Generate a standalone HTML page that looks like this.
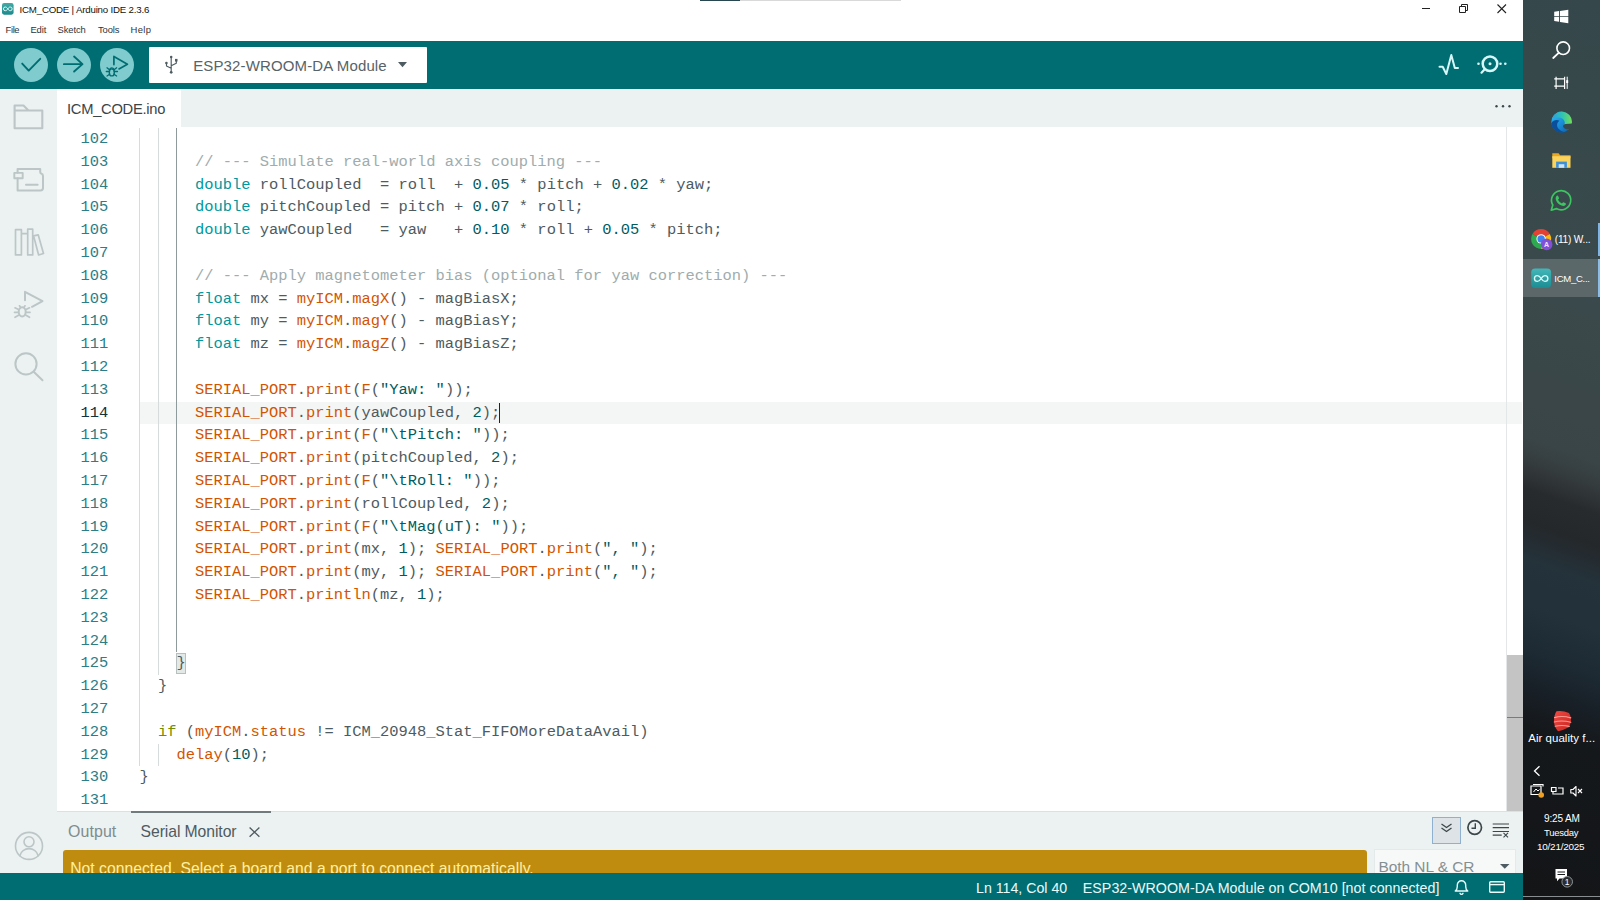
<!DOCTYPE html>
<html lang="en">
<head>
<meta charset="utf-8">
<title>ICM_CODE | Arduino IDE 2.3.6</title>
<style>
*{box-sizing:border-box;margin:0;padding:0}
html,body{width:1600px;height:900px;overflow:hidden;background:#fff}
body{position:relative;font-family:"Liberation Sans",sans-serif;color:#4e5b61}
.abs{position:absolute}
svg{position:absolute;overflow:visible}
.t{position:absolute;white-space:pre;line-height:1}
#app{position:absolute;left:0;top:0;width:1522.5px;height:900px;background:#fff;overflow:hidden}
#toolbar{position:absolute;left:0;top:40.8px;width:1523px;height:47.9px;background:#006d73}
.tbtn{position:absolute;top:7.3px;width:34px;height:34px;border-radius:50%;background:#7fcbcd}
#board{position:absolute;left:149px;top:6.7px;width:277.8px;height:35.4px;background:#fff;border-radius:1px}
#sidebar{position:absolute;left:0;top:88.7px;width:57px;height:785px;background:#ecf1f1}
#tabbar{position:absolute;left:57px;top:88.7px;width:1466px;height:38.6px;background:#ecf1f1}
#tab{position:absolute;left:0;top:0;width:124px;height:38.6px;background:#fff}
#editor{position:absolute;left:57px;top:127.3px;width:1466px;height:683.7px;background:#fff;overflow:hidden}
#bottom{position:absolute;left:57px;top:811px;width:1466px;height:63px;background:#ecf1f1;overflow:hidden}
#status{position:absolute;left:0;top:873.4px;width:1523px;height:27px;background:#006d73}
.code{font-family:"Liberation Mono","DejaVu Sans Mono",monospace;font-size:15.43px;color:#4e5b61}
.ln{position:absolute;left:0;width:51.2px;text-align:right;color:#2b7d86;height:22.8px;line-height:22.8px;white-space:pre}
.cl{position:absolute;left:82.4px;height:22.8px;line-height:22.8px;white-space:pre}
.c{color:#a0acad}.k{color:#00979d}.n{color:#005c5f}.f{color:#d35400}.g{color:#728e00}.s{color:#005c5f}
.guide{position:absolute;width:1px;background:#d6dbdb}
#taskbar{position:absolute;left:1522.5px;top:0;width:77.5px;height:900px;overflow:hidden;
 background:linear-gradient(200deg,#35474a 0%,#3a4a4c 30%,#3a4547 50%,#353c3e 52.5%,#282b2e 55.5%,#24282b 59%,#24323a 63%,#22313a 68%,#1d2a33 73%,#181f26 77%,#15181b 81%,#131517 100%)}
</style>
</head>

<body>
<div id="app">
<!-- title bar -->
<div class="abs" style="left:700px;top:0;width:40px;height:1px;background:#274650"></div>
<div class="abs" style="left:740px;top:0;width:161px;height:1px;background:#d9d9d9"></div>
<svg style="left:2.400px;top:3.250px" width="11.600" height="11.700" viewBox="0 0 12 12">
  <defs><linearGradient id="ag" x1="0" y1="0" x2="0" y2="1"><stop offset="0" stop-color="#43aaa6"/><stop offset="1" stop-color="#1d8a8c"/></linearGradient></defs>
  <rect x="0" y="0" width="12" height="12" rx="2.2" fill="url(#ag)"/>
  <path d="M6 6c-.9-1.4-1.6-1.9-2.6-1.9a1.9 1.9 0 0 0 0 3.8c1 0 1.700-.5 2.600-1.900c.9 1.400 1.600 1.900 2.600 1.900a1.900 1.900 0 0 0 0-3.800c-1 0-1.700.5-2.600 1.900z" fill="none" stroke="#e8fbfb" stroke-width="1"/>
</svg>
<!-- window controls -->
<svg style="left:1415px;top:0" width="100" height="19" viewBox="0 0 100 19">
  <path d="M7 8.500h8" stroke="#222" stroke-width="1" fill="none"/>
  <path d="M44.500 6.500h6v6h-6zM46.500 6.500v-2h6v6h-2" stroke="#222" stroke-width="1" fill="none"/>
  <path d="M82.500 4.500l8.500 8.500M91 4.500l-8.500 8.500" stroke="#222" stroke-width="1.100" fill="none"/>
</svg>
<!-- toolbar -->
<div id="toolbar">
  <div class="tbtn" style="left:14px"></div>
  <div class="tbtn" style="left:57.300px"></div>
  <div class="tbtn" style="left:100.300px"></div>
  <svg style="left:14px;top:7.300px" width="34" height="34" viewBox="0 0 34 34"><path d="M8.200 15.600l6.500 7L26.200 10.800" fill="none" stroke="#006d73" stroke-width="1.900" stroke-linecap="round" stroke-linejoin="round"/></svg>
  <svg style="left:57.300px;top:7.300px" width="34" height="34" viewBox="0 0 34 34"><path d="M6.900 16.150H25.300M17.100 8.550l8.400 7.600l-8.400 7.350" fill="none" stroke="#006d73" stroke-width="1.900" stroke-linecap="round" stroke-linejoin="round"/></svg>
  <svg style="left:100.300px;top:7.300px" width="34" height="34" viewBox="0 0 34 34" fill="none" stroke="#006d73" stroke-linecap="round" stroke-linejoin="round">
    <path d="M13.900 16.600V8.400l13.500 7.800l-8.400 4.700" stroke-width="1.700"/>
    <ellipse cx="11.800" cy="24.400" rx="2.500" ry="3.500" stroke-width="1.400"/>
    <path d="M9.700 21.200a2.300 2.300 0 0 1 4.200 0" stroke-width="1.300"/>
    <path d="M6.300 23.500h3M14.300 23.500h3.200M7 19.800l2.500 2M16.600 19.800l-2.500 2M7 28l2.600-1.700M16.600 28l-2.600-1.700" stroke-width="1.300"/>
  </svg>
  <div id="board"></div>
  <!-- usb icon -->
  <svg style="left:165px;top:14.500px" width="14" height="19" viewBox="0 0 14 19">
    <path d="M6.200 2.300V17M6.200 13.300L1.500 11V8.200M6.200 10.800l5.100-2.600V5.200" fill="none" stroke="#4e5b61" stroke-width="1.150" stroke-linecap="round" stroke-linejoin="round"/>
    <circle cx="6.200" cy="17.300" r="1.350" fill="#4e5b61"/><circle cx="6.200" cy="2.100" r="1.250" fill="#4e5b61"/><circle cx="1.400" cy="8" r="1.300" fill="#4e5b61"/><rect x="10" y="3.900" width="2.500" height="2.600" fill="#4e5b61"/>
  </svg>
  <svg style="left:398.300px;top:21px" width="10" height="6" viewBox="0 0 10 6"><path d="M0 0h9L4.500 5.200z" fill="#4e5b61"/></svg>
  <!-- plotter -->
  <svg style="left:1437px;top:11px" width="24" height="26" viewBox="0 0 24 26"><path d="M2.500 14.800h3.200l3.600 7.200l5-19l3.500 13h3.200" fill="none" stroke="#d6f7f7" stroke-width="2" stroke-linejoin="round" stroke-linecap="round"/></svg>
  <!-- serial monitor -->
  <svg style="left:1474px;top:11px" width="36" height="26" viewBox="0 0 36 26">
    <circle cx="16" cy="11.800" r="7.300" fill="none" stroke="#d6f7f7" stroke-width="2.500"/>
    <path d="M10.500 17.500L7.500 20.700" stroke="#d6f7f7" stroke-width="2.200" stroke-linecap="round"/>
    <circle cx="16" cy="11.800" r="1.500" fill="#d6f7f7"/><circle cx="4.500" cy="11.800" r="1.300" fill="#d6f7f7"/><circle cx="26.500" cy="11.800" r="1.300" fill="#d6f7f7"/><circle cx="31.300" cy="11.800" r="1.300" fill="#d6f7f7"/>
  </svg>
</div>
<!-- tab bar -->
<div id="tabbar"><div id="tab"></div>
  <svg style="left:1436px;top:15.600px" width="20" height="5" viewBox="0 0 20 5"><circle cx="3.500" cy="2.200" r="1.200" fill="#3c474a"/><circle cx="10" cy="2.200" r="1.200" fill="#3c474a"/><circle cx="16.500" cy="2.200" r="1.200" fill="#3c474a"/></svg>
</div>

<div id="sidebar">
  <!-- coordinates inside are page coords minus (0,88.5) -->
  <svg style="left:0;top:0" width="57" height="785" viewBox="0 88.700 57 785" fill="none" stroke="#bcc6c7" stroke-width="2" stroke-linejoin="round" stroke-linecap="round">
    <!-- folder -->
    <path d="M14.600 128V105.200h8.900l5 5H42.300V128zM14.600 110.200H28.500" stroke-width="2.100"/>
    <!-- boards -->
    <path d="M17.600 172.500V168.700H40.200V171.300q0 2 1.300 2.100q1.500.4 1.500 2.200V187.800q0 2.400-2.500 2.400H17.600V178" stroke-width="2"/>
    <rect x="14.300" y="172.600" width="8.400" height="5.400" stroke-width="1.900"/>
    <path d="M26 184.400H37.600" stroke-width="2"/>
    <!-- library -->
    <path d="M15.500 229.400h5.900v25.200h-5.900zM21.400 233.400h6.300v21.200M27.700 228.900h5v25.700h-5zM33.600 235.600l4.600-1.100l5.300 18.700l-4.900 1.500z" stroke-width="1.700"/>
    <!-- debug -->
    <path d="M25 300V291.500l17.500 9.300l-10.500 5.700"/>
    <ellipse cx="22.200" cy="311.500" rx="3.500" ry="4.600" stroke-width="2"/>
    <path d="M15 307.500l3.500 1.700M29.500 307.500l-3.500 1.700M14.500 312h3.500M30 312h-3.500M15 317l3.500-2M29.500 317l-3.500-2M19.500 305.500l1 1.500M25 305.500l-1 1.500" stroke-width="1.700"/>
    <!-- search -->
    <circle cx="26" cy="363.600" r="10.600"/>
    <path d="M33.700 371.500L42.500 380"/>
    <!-- account -->
    <circle cx="29" cy="845.600" r="13.500" stroke-width="1.600"/>
    <circle cx="29" cy="841.500" r="5" stroke-width="1.600"/>
    <path d="M19.800 855.500a9.500 9.500 0 0 1 18.400 0" stroke-width="1.600"/>
  </svg>
</div>

<div id="editor" class="code">
<div class="abs" style="left:83px;top:274.9px;width:1382px;height:21.6px;background:#f4f6f6"></div>
<div class="abs" style="left:119.2px;top:525.4px;width:9.4px;height:21.6px;border:1px solid #b7bfbf;background:#e3e9e6"></div>
<div class="guide" style="left:82.1px;top:0.7px;height:638.4px"></div>
<div class="guide" style="left:100.5px;top:0.7px;height:547.2px"></div>
<div class="guide" style="left:119.0px;top:0.7px;height:524.4px;background:#8f9a9a"></div>
<div class="guide" style="left:100.5px;top:616.3px;height:22.8px"></div>
<div class="ln" style="top:0.7px">102</div>
<div class="ln" style="top:23.5px">103</div>
<div class="cl" style="top:23.5px"><span class="c">      // --- Simulate real-world axis coupling ---</span></div>
<div class="ln" style="top:46.3px">104</div>
<div class="cl" style="top:46.3px">      <span class="k">double</span> rollCoupled  = roll  + <span class="n">0.05</span> * pitch + <span class="n">0.02</span> * yaw;</div>
<div class="ln" style="top:69.1px">105</div>
<div class="cl" style="top:69.1px">      <span class="k">double</span> pitchCoupled = pitch + <span class="n">0.07</span> * roll;</div>
<div class="ln" style="top:91.9px">106</div>
<div class="cl" style="top:91.9px">      <span class="k">double</span> yawCoupled   = yaw   + <span class="n">0.10</span> * roll + <span class="n">0.05</span> * pitch;</div>
<div class="ln" style="top:114.7px">107</div>
<div class="ln" style="top:137.5px">108</div>
<div class="cl" style="top:137.5px"><span class="c">      // --- Apply magnetometer bias (optional for yaw correction) ---</span></div>
<div class="ln" style="top:160.3px">109</div>
<div class="cl" style="top:160.3px">      <span class="k">float</span> mx = <span class="f">myICM</span>.<span class="f">magX</span>() - magBiasX;</div>
<div class="ln" style="top:183.1px">110</div>
<div class="cl" style="top:183.1px">      <span class="k">float</span> my = <span class="f">myICM</span>.<span class="f">magY</span>() - magBiasY;</div>
<div class="ln" style="top:205.9px">111</div>
<div class="cl" style="top:205.9px">      <span class="k">float</span> mz = <span class="f">myICM</span>.<span class="f">magZ</span>() - magBiasZ;</div>
<div class="ln" style="top:228.7px">112</div>
<div class="ln" style="top:251.5px">113</div>
<div class="cl" style="top:251.5px">      <span class="f">SERIAL_PORT</span>.<span class="f">print</span>(<span class="f">F</span>(<span class="s">"Yaw: "</span>));</div>
<div class="ln" style="top:274.3px;color:#14323a">114</div>
<div class="cl" style="top:274.3px">      <span class="f">SERIAL_PORT</span>.<span class="f">print</span>(yawCoupled, <span class="n">2</span>);</div>
<div class="ln" style="top:297.1px">115</div>
<div class="cl" style="top:297.1px">      <span class="f">SERIAL_PORT</span>.<span class="f">print</span>(<span class="f">F</span>(<span class="s">"\tPitch: "</span>));</div>
<div class="ln" style="top:319.9px">116</div>
<div class="cl" style="top:319.9px">      <span class="f">SERIAL_PORT</span>.<span class="f">print</span>(pitchCoupled, <span class="n">2</span>);</div>
<div class="ln" style="top:342.7px">117</div>
<div class="cl" style="top:342.7px">      <span class="f">SERIAL_PORT</span>.<span class="f">print</span>(<span class="f">F</span>(<span class="s">"\tRoll: "</span>));</div>
<div class="ln" style="top:365.5px">118</div>
<div class="cl" style="top:365.5px">      <span class="f">SERIAL_PORT</span>.<span class="f">print</span>(rollCoupled, <span class="n">2</span>);</div>
<div class="ln" style="top:388.3px">119</div>
<div class="cl" style="top:388.3px">      <span class="f">SERIAL_PORT</span>.<span class="f">print</span>(<span class="f">F</span>(<span class="s">"\tMag(uT): "</span>));</div>
<div class="ln" style="top:411.1px">120</div>
<div class="cl" style="top:411.1px">      <span class="f">SERIAL_PORT</span>.<span class="f">print</span>(mx, <span class="n">1</span>); <span class="f">SERIAL_PORT</span>.<span class="f">print</span>(<span class="s">", "</span>);</div>
<div class="ln" style="top:433.9px">121</div>
<div class="cl" style="top:433.9px">      <span class="f">SERIAL_PORT</span>.<span class="f">print</span>(my, <span class="n">1</span>); <span class="f">SERIAL_PORT</span>.<span class="f">print</span>(<span class="s">", "</span>);</div>
<div class="ln" style="top:456.7px">122</div>
<div class="cl" style="top:456.7px">      <span class="f">SERIAL_PORT</span>.<span class="f">println</span>(mz, <span class="n">1</span>);</div>
<div class="ln" style="top:479.5px">123</div>
<div class="ln" style="top:502.3px">124</div>
<div class="ln" style="top:525.1px">125</div>
<div class="cl" style="top:525.1px">    }</div>
<div class="ln" style="top:547.9px">126</div>
<div class="cl" style="top:547.9px">  }</div>
<div class="ln" style="top:570.7px">127</div>
<div class="ln" style="top:593.5px">128</div>
<div class="cl" style="top:593.5px">  <span class="g">if</span> (<span class="f">myICM</span>.<span class="f">status</span> != ICM_20948_Stat_FIFOMoreDataAvail)</div>
<div class="ln" style="top:616.3px">129</div>
<div class="cl" style="top:616.3px">    <span class="f">delay</span>(<span class="n">10</span>);</div>
<div class="ln" style="top:639.1px">130</div>
<div class="cl" style="top:639.1px">}</div>
<div class="ln" style="top:661.9px">131</div>
<div class="abs" style="left:441.5px;top:275.7px;width:1.6px;height:20px;background:#222"></div>
<div class="abs" style="left:1449px;top:0;width:1px;height:684px;background:#e3e7e7"></div>
<div class="abs" style="left:1449.7px;top:528px;width:16.3px;height:156px;background:#c4c4c4"></div>
<div class="abs" style="left:1449.7px;top:589.6px;width:16.3px;height:1.5px;background:#7a7a7a"></div>
</div>
<div id="bottom">
  <!-- coords relative to (57,811) -->
  <div class="abs" style="left:0;top:0;width:1466px;height:1px;background:#dbe1e1"></div>
  <div class="abs" style="left:74px;top:.3px;width:140px;height:1.600px;background:#6f7b7d"></div>
  <!-- close x -->
  <svg style="left:192.100px;top:16.100px" width="11" height="10.300" viewBox="0 0 11 10.300"><path d="M.6 .5l9.800 9.300M10.400 .5L.6 9.800" stroke="#4e5b61" stroke-width="1.300" fill="none"/></svg>
  <!-- warning bar -->
  <div class="abs" style="left:6.400px;top:38.800px;width:1303.500px;height:30px;background:#c08c10;border-radius:3px 3px 0 0"></div>
  <div class="t" id="t_warn" style="left:13.20px;top:49.91px;font-size:15.70px;color:#fff0a0;letter-spacing:0.025px;">Not connected. Select a board and a port to connect automatically.</div>
  <!-- dropdown -->
  <div class="abs" style="left:1316.700px;top:38.400px;width:142.500px;height:32px;background:#f7f9f9;border:1px solid #e4e9e9"></div>
  <div class="t" id="t_nl" style="left:1321.50px;top:48.12px;font-size:15.45px;color:#858f91;letter-spacing:-0.045px;">Both NL &amp; CR</div>
  <svg style="left:1443px;top:52.600px" width="10" height="5" viewBox="0 0 10 5"><path d="M0 0h9.500L4.750 4.800z" fill="#4e5b61"/></svg>
  <!-- buttons -->
  <div class="abs" style="left:1375px;top:5.800px;width:28.700px;height:27.700px;background:#dde3e6;border:1px solid #8fb1cf"></div>
  <svg style="left:1383px;top:12px" width="13" height="10" viewBox="0 0 13 10"><path d="M1.500 1l5 3.500l5-3.500M1.500 5l5 3.500l5-3.500" fill="none" stroke="#3c474a" stroke-width="1.300"/></svg>
  <svg style="left:1409px;top:7.500px" width="18" height="18" viewBox="0 0 18 18"><circle cx="8.700" cy="8.500" r="6.800" fill="none" stroke="#3c474a" stroke-width="1.700"/><path d="M9.300 4.300v4.900h-3.800" fill="none" stroke="#3c474a" stroke-width="1.400"/></svg>
  <svg style="left:1435px;top:12px" width="18" height="15" viewBox="0 0 18 15"><path d="M.7 1h16.300M.7 4.700h16.300M.7 8.500h16.300M.7 12.200h9" stroke="#3c474a" stroke-width="1.200" fill="none"/><path d="M11.500 9.800l4.500 4.500M16 9.800l-4.500 4.500" stroke="#3c474a" stroke-width="1.100" fill="none"/></svg>
</div>

<div id="status">
  <!-- coords relative to (0,873.3) -->
  <svg style="left:1454px;top:5.500px" width="15" height="16" viewBox="0 0 15 16" fill="none" stroke="#e9fbfb" stroke-width="1.400" stroke-linejoin="round" stroke-linecap="round">
    <path d="M1.200 12h12.600c-1.600-1-2.100-2.500-2.100-4.500V6a4.200 4.200 0 0 0-8.400 0v1.500c0 2-.5 3.500-2.100 4.500z"/><path d="M6 14.300a1.600 1.600 0 0 0 3 0"/>
  </svg>
  <svg style="left:1488.500px;top:7.500px" width="16" height="12" viewBox="0 0 16 12" fill="none" stroke="#e9fbfb" stroke-width="1.400"><rect x=".7" y=".7" width="14.600" height="10.600" rx="1"/><path d="M.7 3.600h14.600"/></svg>
</div>

</div>
<div id="taskbar">
  <!-- coords relative to (1522.5,0) -->
  <div class="abs" style="left:0;top:258.800px;width:77.500px;height:38.200px;background:rgba(255,255,255,.17)"></div>
  <div class="abs" style="left:75.700px;top:222.500px;width:1.800px;height:33px;background:#7fb5e6"></div>
  <div class="abs" style="left:75.700px;top:258.800px;width:1.800px;height:38.200px;background:#8cbde9"></div>
  <div class="abs" style="left:0;top:896px;width:77.500px;height:1px;background:#8a8d8f"></div>
  <svg style="left:0;top:0" width="77.500" height="900" viewBox="1522.500 0 77.500 900">
    <!-- windows logo -->
    <path d="M1553.700 11.800l4.900-.75v4.850h-4.900zM1559.500 10.900l8.300-1.200v6.200h-8.300zM1553.700 16.800h4.900v4.850l-4.900-.75zM1559.500 16.800h8.300v6.400l-8.300-1.250z" fill="#fff"/>
    <!-- search -->
    <circle cx="1562.700" cy="48.200" r="6.300" fill="none" stroke="#fff" stroke-width="1.600"/><path d="M1558.200 52.800L1552.700 58" stroke="#fff" stroke-width="1.800" stroke-linecap="round"/>
    <!-- task view -->
    <path d="M1555.600 78.900h8.500v7.200h-8.500zM1553.700 78.900h1.900M1553.700 86.100h1.900M1555.600 76.700v2.200M1555.600 86.100v2.800M1564.100 76.700v2.200M1564.100 86.100v2.800" fill="none" stroke="#fff" stroke-width="1.200"/>
    <path d="M1566.700 76.700V88.900" stroke="#fff" stroke-width="1"/><path d="M1566.700 80.200V83" stroke="#fff" stroke-width="2"/>
    <!-- edge -->
    <defs>
      <linearGradient id="eg1" x1="0" y1="0" x2="1" y2="1"><stop offset="0" stop-color="#35c1f1"/><stop offset=".5" stop-color="#1a8fd8"/><stop offset="1" stop-color="#0c59a4"/></linearGradient>
      <linearGradient id="eg2" x1="0" y1="0" x2="1" y2="0"><stop offset="0" stop-color="#2b9fe0"/><stop offset=".5" stop-color="#2fc3b4"/><stop offset="1" stop-color="#74dd55"/></linearGradient>
    </defs>
    <circle cx="1561.100" cy="122" r="10.300" fill="url(#eg1)"/>
    <path d="M1551.500 118.200a10.300 10.300 0 0 1 19.900 3.300c.2 1.800-.4 3-1.600 3.600c-1.500.7-4.800.3-6-.3c.5-1.200.6-2 .3-3c-.6-2.400-3-4.300-5.800-4.300c-3 0-5.500.5-6.800.7z" fill="url(#eg2)"/>
    <path d="M1559 120.800c-2.600 1.600-3.200 5.100-1.200 7.700c1.600 2 4.200 3.400 7.200 3.400c-7.200 2.100-13.400-2-14.200-8.500c1.600-3.100 5.200-4.100 8.200-2.600z" fill="#0b4f9a"/>
    <path d="M1572 123.600l-6.800.3q-2.800.5-2.600 2.500q.5 2.300 4 2.800l4.500-.8z" fill="#38494c"/>
    <!-- explorer -->
    <path d="M1551.800 153.300h6.300l1.500 1.900h10.400v3h-18.200z" fill="#e9a820"/>
    <rect x="1551.800" y="156.200" width="18.200" height="11.600" fill="#fbd45e"/>
    <rect x="1555.600" y="161.600" width="10.800" height="6.200" fill="#3f8fd6"/><rect x="1558.200" y="164.200" width="5.600" height="3.600" fill="#cfe4f7"/>
    <!-- whatsapp -->
    <g transform="translate(-1.200 .4)">
    <path d="M1552 209.800l1.500-5.200a9.600 9.600 0 1 1 3.600 3.600z" fill="none" stroke="#3cc561" stroke-width="1.700" stroke-linejoin="round"/>
    <path d="M1557 195.800c.5-1 1.500-.8 1.800-.2l.9 2c.2.500-.7 1.300-.9 1.700c.8 1.700 2.200 3 3.900 3.700c.4-.4 1-1.300 1.500-1.100l2 1c.6.300.6 1.300-.2 2c-1.500 1.300-3.700.6-5.500-.5c-2-1.300-3.500-3.300-4-5.300c-.3-1.300-.1-2.500.5-3.300z" fill="#3cc561"/>
    </g>
    <!-- chrome -->
    <path d="M1540.60 238.90L1531.94 233.90A10.0 10.0 0 0 1 1549.26 233.90z" fill="#e34133"/>
    <path d="M1540.60 238.90L1549.26 233.90A10.0 10.0 0 0 1 1540.60 248.90z" fill="#f9bb0a"/>
    <path d="M1540.60 238.90L1540.60 248.90A10.0 10.0 0 0 1 1531.94 233.90z" fill="#2da94f"/>
    <circle cx="1540.6" cy="238.9" r="4.700" fill="#fff"/><circle cx="1540.6" cy="238.9" r="3.700" fill="#3e82f1"/>
    <circle cx="1546.100" cy="244.400" r="5.800" fill="#8250d8"/>
    <text x="1546.100" y="247" font-family="Liberation Sans, sans-serif" font-size="7" font-weight="bold" fill="#efe6ff" text-anchor="middle">A</text>
    <!-- arduino -->
    <defs><linearGradient id="ag2" x1="0" y1="0" x2="0" y2="1"><stop offset="0" stop-color="#43b7b9"/><stop offset="1" stop-color="#1b8d93"/></linearGradient></defs>
    <rect x="1530.700" y="268.400" width="19.900" height="19.500" rx="4" fill="url(#ag2)"/>
    <path d="M1540.650 278.500c-1.300-2.100-2.400-2.900-3.800-2.900a2.900 2.900 0 0 0 0 5.800c1.400 0 2.500-.8 3.800-2.900c1.300 2.100 2.400 2.900 3.800 2.900a2.900 2.900 0 0 0 0-5.800c-1.400 0-2.500.8-3.800 2.900z" fill="none" stroke="#d9fbfb" stroke-width="1.400"/>
    <!-- air quality -->
    <defs><linearGradient id="aq" x1="0" y1="0" x2="1" y2="1"><stop offset="0" stop-color="#f04a44"/><stop offset="1" stop-color="#c9241f"/></linearGradient></defs>
    <path d="M1556 711.200q6.500-.8 12.500 1.800q2.300 3.200 2 7.500q-.3 4-2.200 6.800q-5.300 3-10.800 3.900q-2.600-2.700-3.500-6.200q-1-4.500 0-9q.6-3 2-4.800z" fill="url(#aq)"/>
    <g fill="none" stroke="#ff9c94" stroke-width="1.100" stroke-linecap="round">
      <path d="M1554 717.600q7.500-2.300 16.300.3"/><path d="M1553.800 722q7.500-2 16.500.3"/><path d="M1554.600 726.200q7-1.600 14.200.2"/>
    </g>
    <!-- chevron -->
    <path d="M1539 766.300l-5 4.700l5 4.700" fill="none" stroke="#fff" stroke-width="1.300"/>
    <!-- tray icons -->
    <path d="M1530.500 786h10v8.500h-10zM1532.500 784.500h10v2" fill="none" stroke="#fff" stroke-width="1.200"/>
    <path d="M1533 792l2.500-3l2 2l1.500-1.500" fill="none" stroke="#fff" stroke-width="1"/>
    <circle cx="1540.700" cy="795" r="2.800" fill="#f0a020"/>
    <path d="M1551 787.500h4.500v4h-4.500zM1553 794h9.500v-6h-5" fill="none" stroke="#fff" stroke-width="1.200"/><path d="M1552.500 792v2.500" stroke="#fff" stroke-width="1.200"/>
    <path d="M1570.300 789.500h2.200l3-3v9.500l-3-3h-2.200z" fill="none" stroke="#fff" stroke-width="1.100" stroke-linejoin="round"/>
    <path d="M1577.500 789l4 4M1581.500 789l-4 4" stroke="#fff" stroke-width="1.100"/>
    <!-- notification -->
    <path d="M1555 869h11.500v9.500h-7.500l-2.500 2.700v-2.700h-1.500z" fill="#fff"/>
    <path d="M1557 872h7.500M1557 874.500h7.500" stroke="#1a1c1e" stroke-width="1"/>
    <circle cx="1566.700" cy="881.800" r="5.300" fill="#2a2d30" stroke="#8f9396" stroke-width="1"/>
    <text x="1566.700" y="884.800" font-family="Liberation Sans, sans-serif" font-size="8.500" fill="#fff" text-anchor="middle">1</text>
  </svg>
</div>

<!-- text layer -->
<div class="t" id="t_title" style="left:19.50px;top:5.19px;font-size:9.70px;color:#111;letter-spacing:-0.189px;">ICM_CODE | Arduino IDE 2.3.6</div>
<div class="t" id="t_file" style="left:5.50px;top:25.14px;font-size:9.41px;color:#333;letter-spacing:-0.351px;">File</div>
<div class="t" id="t_edit" style="left:30.50px;top:25.14px;font-size:9.41px;color:#333;letter-spacing:-0.150px;">Edit</div>
<div class="t" id="t_sketch" style="left:57.60px;top:25.14px;font-size:9.41px;color:#333;letter-spacing:-0.100px;">Sketch</div>
<div class="t" id="t_tools" style="left:98.00px;top:25.14px;font-size:9.41px;color:#333;letter-spacing:-0.125px;">Tools</div>
<div class="t" id="t_help" style="left:130.60px;top:25.14px;font-size:9.41px;color:#333;letter-spacing:0.331px;">Help</div>
<div class="t" id="t_board" style="left:193.20px;top:58.10px;font-size:15.00px;color:#566368;letter-spacing:0.130px;">ESP32-WROOM-DA Module</div>
<div class="t" id="t_tab" style="left:67.00px;top:101.55px;font-size:14.71px;color:#3a4549;letter-spacing:-0.267px;">ICM_CODE.ino</div>
<div class="t" id="t_output" style="left:68.00px;top:824.03px;font-size:15.92px;color:#7f8c8d;letter-spacing:0.100px;">Output</div>
<div class="t" id="t_serial" style="left:140.60px;top:824.19px;font-size:15.72px;color:#4e5b61;letter-spacing:-0.080px;">Serial Monitor</div>
<div class="t" id="t_ln" style="left:976.00px;top:881.28px;font-size:14.20px;color:#e9fbfb;letter-spacing:0.000px;">Ln 114, Col 40</div>
<div class="t" id="t_st" style="left:1082.80px;top:881.24px;font-size:14.25px;color:#e9fbfb;letter-spacing:0.022px;">ESP32-WROOM-DA Module on COM10 [not connected]</div>
<div class="t" id="t_w" style="left:1554.80px;top:235.16px;font-size:10.09px;color:#fff;letter-spacing:-0.200px;">(11) W...</div>
<div class="t" id="t_icm" style="left:1554.30px;top:274.10px;font-size:9.57px;color:#fff;letter-spacing:-0.300px;">ICM_C...</div>
<div class="t" id="t_air" style="left:1528.20px;top:732.61px;font-size:11.45px;color:#fff;letter-spacing:0.064px;">Air quality f...</div>
<div class="t" id="t_time" style="left:1544.00px;top:813.80px;font-size:10.05px;color:#fff;letter-spacing:-0.167px;">9:25 AM</div>
<div class="t" id="t_day" style="left:1544.00px;top:828.48px;font-size:9.48px;color:#fff;letter-spacing:-0.248px;">Tuesday</div>
<div class="t" id="t_date" style="left:1537.00px;top:841.61px;font-size:9.92px;color:#fff;letter-spacing:-0.219px;">10/21/2025</div>
</body>
</html>
